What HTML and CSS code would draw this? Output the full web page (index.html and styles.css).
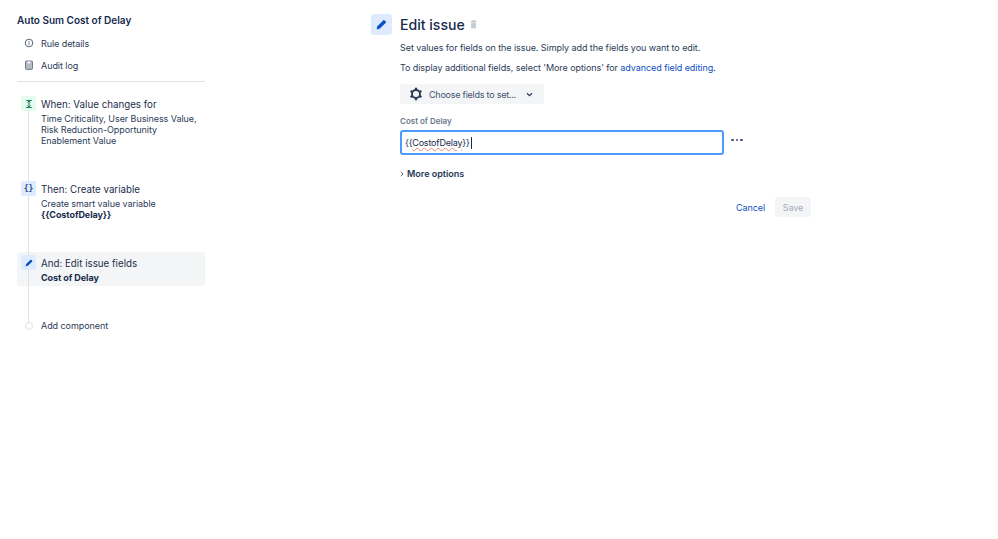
FILE: index.html
```html
<!DOCTYPE html>
<html lang="en">
<head>
<meta charset="utf-8">
<title>Edit issue</title>
<link rel="stylesheet" href="styles.css">
</head>
<body>
<div class="page">
  <aside class="sidebar">
    <h2 class="rule-title">Auto Sum Cost of Delay</h2>
    <nav class="rule-nav">
      <a class="nav-item"><svg class="nav-icon" viewBox="0 0 10 10"><circle cx="5" cy="5" r="3.8" fill="none" stroke="#5a6478" stroke-width="1"/><path d="M5 4.500v2.400M5 3v.9" stroke="#5a6478" stroke-width="1"/></svg>Rule details</a>
      <a class="nav-item"><svg class="nav-icon" viewBox="0 0 10 10"><rect x="1.500" y="1" width="7" height="8.400" rx=".8" fill="#b4b9c4" stroke="#5a6478" stroke-width=".8"/><path d="M3.500 1.500h3v1.800h-3z" fill="#fff"/></svg>Audit log</a>
    </nav>
    <div class="divider"></div>
    <div class="timeline">
      <div class="step step-when">
        <span class="badge badge-green"><svg viewBox="0 0 10 10" class="badge-svg"><path d="M2.200 1.500h5.600M2.200 8.500h5.600M5 2v6M3.500 3.600 5 2.200l1.500 1.400M3.500 6.400 5 7.800l1.500-1.400" fill="none" stroke="#1f7a56" stroke-width="1"/></svg></span>
        <div class="step-body">
          <div class="step-title">When: Value changes for</div>
          <div class="step-text">Time Criticality, User Business Value,<br>Risk Reduction-Opportunity<br>Enablement Value</div>
        </div>
      </div>
      <div class="step step-then">
        <span class="badge badge-blue"><span class="braces">{}</span></span>
        <div class="step-body">
          <div class="step-title">Then: Create variable</div>
          <div class="step-text">Create smart value variable<br><b>{{CostofDelay}}</b></div>
        </div>
      </div>
      <div class="step step-and">
        <span class="badge badge-blue"><svg viewBox="0 0 12 12" class="badge-svg"><path d="M2 10l.6-2.700 5-5a.9.9 0 0 1 1.300 0l.8.8a.9.9 0 0 1 0 1.300l-5 5z" fill="#0b4fc4"/></svg></span>
        <div class="step-body">
          <div class="step-title">And: Edit issue fields</div>
          <div class="step-text"><b>Cost of Delay</b></div>
        </div>
      </div>
      <div class="step step-add">
        <span class="dot"></span>
        <div class="step-add-label">Add component</div>
      </div>
    </div>
  </aside>
  <main class="editor">
    <header class="editor-head">
      <span class="head-badge"><svg viewBox="0 0 12 12" class="head-svg"><path d="M1.500 10.500l.7-3 5.300-5.300a1 1 0 0 1 1.400 0l.9.9a1 1 0 0 1 0 1.400l-5.300 5.300z" fill="#0b4fc4"/></svg></span>
      <h1 class="editor-title">Edit issue</h1>
      <svg class="trash" viewBox="0 0 8 10"><path d="M.5 1.500h7M3 1.500V.6h2v.9" stroke="#b9bcc3" stroke-width=".9" fill="none"/><path d="M1.200 2.600h5.600v6.800H1.200z" fill="#c9ccd2"/></svg>
    </header>
    <div class="editor-body">
      <p class="para">Set values for fields on the issue. Simply add the fields you want to edit.</p>
      <p class="para">To display additional fields, select 'More options' for <a class="link">advanced field editing</a>.</p>
      <button class="choose">
        <svg class="gear" viewBox="0 0 14 14"><circle cx="7" cy="7" r="4" fill="none" stroke="#2b3a55" stroke-width="1.900"/><path d="M7 .8v2M7 11.200v2M1.600 3.900 3.300 4.900M10.700 9.100l1.700 1M12.400 3.900l-1.700 1M3.300 9.100l-1.700 1" stroke="#2b3a55" stroke-width="2.200"/></svg>
        <span>Choose fields to set...</span>
        <svg class="chev" viewBox="0 0 8 6"><path d="M1 1.500l3 3 3-3" fill="none" stroke="#2b3a55" stroke-width="1.400"/></svg>
      </button>
      <label class="field-label">Cost of Delay</label>
      <div class="field-row">
        <div class="input"><span>{{<span class="squiggle">CostofDelay</span>}}</span><span class="caret"></span></div>
        <div class="dots"><i></i><i></i><i></i></div>
      </div>
      <div class="more"><svg class="more-chev" viewBox="0 0 4 6"><path d="M1 .8 3 3 1 5.200" fill="none" stroke="#42526e" stroke-width=".9"/></svg>More options</div>
      <div class="actions">
        <a class="cancel">Cancel</a>
        <button class="save">Save</button>
      </div>
    </div>
  </main>
</div>
</body>
</html>
```
FILE: styles.css
```css
* { box-sizing: border-box; }
html, body { margin: 0; height: 100%; background: #fff; }
body { font-family: Inter, "Liberation Sans", sans-serif; color: #172b4d; font-size: 9px; letter-spacing: -0.07px; }
.page { display: flex; height: 539px; overflow: hidden; }
.sidebar { width: 188px; margin-left: 17px; flex: none; padding-top: 14px; }
.rule-title { margin: 0; font-size: 10px; line-height: 13px; font-weight: 600; letter-spacing: 0; }
.rule-nav { display: flex; flex-direction: column; padding: 5px 0 0 7px; }
.nav-item { display: flex; align-items: center; height: 22px; gap: 7px; color: #2c3b57; }
.nav-icon { width: 10px; height: 10px; flex: none; }
.divider { height: 1px; background: #dfe1e6; margin-top: 5px; }
.timeline { position: relative; margin-top: 14px; }
.timeline::before { content: ""; position: absolute; z-index: 1; left: 11px; top: 8px; height: 222px; width: 1px; background: #dfe1e6; }
.step { position: relative; display: flex; gap: 5px; padding-left: 4px; }
.badge { position: relative; z-index: 2; width: 15px; height: 15px; flex: none; border-radius: 2px; display: flex; align-items: center; justify-content: center; }
.badge-green { background: #e3fcef; }
.badge-blue { background: #deebff; }
.badge-svg { width: 10px; height: 10px; }
.braces { font-size: 8px; font-weight: 700; color: #2b4c86; line-height: 1; font-family: "DejaVu Sans Mono", monospace; letter-spacing: 0; }
.step-title { font-size: 9.750px; line-height: 14px; color: #1d2d4a; letter-spacing: 0; margin-top: 2px; }
.step-text { line-height: 11px; margin-top: 1px; color: #2c3b57; }
.step-text b { font-weight: 700; color: #172b4d; }
.step-when { height: 85px; }
.step-then { height: 71px; }
.step-and { height: 34px; background: #f4f5f7; border-radius: 3px; padding-top: 3px; }
.step-add { margin-top: 34px; align-items: center; padding-left: 8px; gap: 8px; }
.dot { position: relative; z-index: 2; width: 8px; height: 8px; border-radius: 50%; border: 1px solid #dfe1e6; background: #fff; flex: none; }
.step-add-label { color: #2c3b57; line-height: 12px; }
.editor { margin-left: 166px; padding-top: 14px; width: 460px; flex: none; }
.editor-head { display: flex; align-items: center; height: 21px; }
.head-badge { width: 21px; height: 21px; border-radius: 3px; background: #deebff; display: flex; align-items: center; justify-content: center; flex: none; }
.head-svg { width: 13px; height: 13px; }
.editor-title { font-size: 14.100px; font-weight: 500; margin: -1px 0 0 8px; line-height: 21px; color: #172b4d; letter-spacing: 0; }
.trash { width: 7px; height: 9px; margin-left: 5px; }
.editor-body { padding-left: 29px; display: flex; flex-direction: column; align-items: flex-start; }
.para { margin: 0; line-height: 13px; color: #2c3b57; }
.para + .para { margin-top: 7px; }
.para:first-child { margin-top: 6px; }
.link { color: #0b4fc4; }
.choose { display: flex; align-items: center; border: 0; border-radius: 3px; background: #f4f5f7; width: 144px; height: 20px; margin-top: 10px; padding: 0 0 0 9px; font: inherit; letter-spacing: -0.24px; color: #42526e; }
.gear { width: 14px; height: 14px; flex: none; }
.choose span { margin-left: 6px; }
.chev { width: 7px; height: 5px; margin-left: 10px; }
.field-label { font-size: 8px; font-weight: 600; color: #6b778c; margin-top: 12px; line-height: 11px; letter-spacing: 0; }
.field-row { display: flex; align-items: center; margin-top: 3px; }
.input { width: 324px; height: 25px; border: 2px solid #4c9aff; border-radius: 3px; display: flex; align-items: center; padding-left: 3px; color: #172b4d; letter-spacing: -0.2px; }
.squiggle { text-decoration: underline wavy rgba(222, 53, 11, 0.55) 1px; text-underline-offset: 1px; }
.caret { width: 1px; height: 12px; background: #172b4d; margin-left: 1px; }
.dots { display: flex; gap: 2px; margin-left: 7px; margin-top: -5px; }
.dots i { width: 2.500px; height: 2.500px; border-radius: 50%; background: #42526e; display: block; }
.more { display: flex; align-items: center; font-weight: 600; margin-top: 12px; line-height: 13px; color: #253858; letter-spacing: 0; }
.more-chev { width: 4px; height: 6px; margin-right: 3px; }
.actions { display: flex; align-items: center; align-self: stretch; justify-content: flex-end; gap: 10px; margin-top: 17px; padding-right: 20px; }
.cancel { color: #0b4fc4; }
.save { width: 36px; height: 20px; border: 0; border-radius: 3px; background: #f4f5f7; color: #a5adba; font: inherit; letter-spacing: inherit; padding: 0; }
```
